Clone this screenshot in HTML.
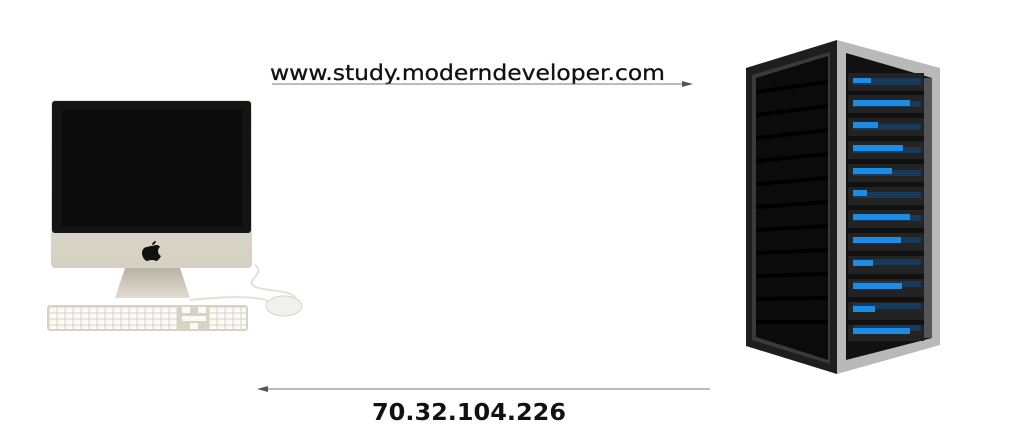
<!DOCTYPE html>
<html><head><meta charset="utf-8"><style>
html,body{margin:0;padding:0;background:#fff;width:1017px;height:447px;overflow:hidden}
</style></head><body>
<svg width="1017" height="447" viewBox="0 0 1017 447" xmlns="http://www.w3.org/2000/svg">
<defs>
<linearGradient id="body" x1="0" y1="0" x2="0" y2="1"><stop offset="0" stop-color="#e8e4da"/><stop offset="1" stop-color="#d6d0c2"/></linearGradient>
<linearGradient id="stand" x1="0" y1="0" x2="0" y2="1"><stop offset="0" stop-color="#b8b2a4"/><stop offset="1" stop-color="#e2ddd2"/></linearGradient>
<pattern id="keys" x="49" y="307" width="8" height="6" patternUnits="userSpaceOnUse"><rect x="0.5" y="0.5" width="7" height="5" fill="#fbfaf7"/></pattern>
</defs>
<text x="270" y="80" font-family="'DejaVu Sans','Liberation Sans',sans-serif" font-size="21" fill="#111" stroke="#111" stroke-width="0.3" textLength="395" lengthAdjust="spacingAndGlyphs">www.study.moderndeveloper.com</text>
<line x1="272" y1="84" x2="688" y2="84" stroke="#777" stroke-width="1"/>
<polygon points="682,81 693,84 682,87" fill="#555"/>
<line x1="262" y1="389" x2="710" y2="389" stroke="#777" stroke-width="1"/>
<polygon points="268,386 257,389 268,392" fill="#555"/>
<text x="372" y="420" font-family="'DejaVu Sans','Liberation Sans',sans-serif" font-weight="bold" font-size="23" fill="#111" textLength="194" lengthAdjust="spacingAndGlyphs">70.32.104.226</text>

<path d="M255,265 C270,275 230,285 270,290 C300,293 300,300 285,303" fill="none" stroke="#e6e1d6" stroke-width="2"/>
<polygon points="125,268 180,268 190,298 115,298" fill="url(#stand)"/>
<rect x="51" y="100" width="201" height="168" rx="4" fill="url(#body)"/>
<rect x="52" y="101" width="199" height="132" rx="3" fill="#141414"/>
<rect x="62" y="110" width="181" height="117" fill="#0c0c0c"/>
<path d="M152,246 c-3,0 -4,1 -5,1 c-3,0 -5,3 -5,6 c0,4 3,8 5,8 c1,0 2,-1 5,-1 c3,0 3,1 4,1 c2,0 4,-3 5,-5 c-2,-1 -3,-3 -3,-5 c0,-2 1,-3 2,-4 c-1,-2 -3,-2 -4,-2 c-1,0 -3,1 -4,1z M152,245 c0,-2 2,-4 4,-4 c0,2 -2,4 -4,4z" fill="#111"/>
<path d="M190,300 C230,296 260,296 270,302" fill="none" stroke="#e6e1d6" stroke-width="2"/>
<rect x="47" y="305" width="201" height="26" rx="3" fill="#d8d2c4"/>
<rect x="49" y="307" width="128" height="22" fill="url(#keys)"/>
<rect x="182" y="307" width="8" height="6" fill="#fbfaf7"/><rect x="198" y="307" width="8" height="6" fill="#fbfaf7"/>
<rect x="182" y="316" width="24" height="5" fill="#fbfaf7"/>
<rect x="190" y="323" width="8" height="6" fill="#fbfaf7"/>
<rect x="209" y="307" width="37" height="22" fill="url(#keys)"/>
<ellipse cx="284" cy="306" rx="18" ry="10" fill="#f2f0ec" stroke="#d8d4cc"/>

<polygon points="746,68 837,40 837,374 746,346" fill="#1e1e1e"/>
<polygon points="752,75 830,52 830,364 752,340" fill="#3a3a3a"/>
<polygon points="756,78 828,56 828,360 756,337" fill="#0b0b0b"/>
<g fill="#000">
<polygon points="756,90 828,80 828,84 756,94"/>
<polygon points="756,113 828,104 828,108 756,117"/>
<polygon points="756,136 828,128 828,132 756,140"/>
<polygon points="756,159 828,152 828,156 756,163"/>
<polygon points="756,182 828,176 828,180 756,186"/>
<polygon points="756,205 828,200 828,204 756,209"/>
<polygon points="756,228 828,224 828,228 756,232"/>
<polygon points="756,251 828,248 828,252 756,255"/>
<polygon points="756,274 828,272 828,276 756,278"/>
<polygon points="756,297 828,296 828,300 756,301"/>
<polygon points="756,320 828,320 828,324 756,324"/>
</g>
<polygon points="837,40 940,68 940,345 837,374" fill="#b9b9b9"/>
<polygon points="846,53 932,78 932,338 846,360" fill="#111"/>
<polygon points="924,78 932,78 932,338 924,338" fill="#555"/>
<g>
<g><rect x="848" y="73" width="76" height="18" fill="#232323"/><rect x="853" y="78" width="68" height="7" fill="#173a5a"/><rect x="853" y="78" width="18" height="5" fill="#1d8ce6"/></g>
<g><rect x="848" y="95" width="76" height="18" fill="#232323"/><rect x="853" y="101" width="68" height="6" fill="#173a5a"/><rect x="853" y="100" width="57" height="6" fill="#1d8ce6"/></g>
<g><rect x="848" y="118" width="76" height="18" fill="#232323"/><rect x="853" y="124" width="68" height="6" fill="#173a5a"/><rect x="853" y="122" width="25" height="6" fill="#1d8ce6"/></g>
<g><rect x="848" y="141" width="76" height="18" fill="#232323"/><rect x="853" y="147" width="68" height="6" fill="#173a5a"/><rect x="853" y="145" width="50" height="6" fill="#1d8ce6"/></g>
<g><rect x="848" y="164" width="76" height="18" fill="#232323"/><rect x="853" y="170" width="68" height="6" fill="#173a5a"/><rect x="853" y="168" width="39" height="6" fill="#1d8ce6"/></g>
<g><rect x="848" y="187" width="76" height="18" fill="#232323"/><rect x="853" y="192" width="68" height="6" fill="#173a5a"/><rect x="853" y="190" width="14" height="6" fill="#1d8ce6"/></g>
<g><rect x="848" y="210" width="76" height="18" fill="#232323"/><rect x="853" y="215" width="68" height="6" fill="#173a5a"/><rect x="853" y="214" width="57" height="6" fill="#1d8ce6"/></g>
<g><rect x="848" y="233" width="76" height="18" fill="#232323"/><rect x="853" y="237" width="68" height="6" fill="#173a5a"/><rect x="853" y="237" width="48" height="6" fill="#1d8ce6"/></g>
<g><rect x="848" y="256" width="76" height="18" fill="#232323"/><rect x="853" y="259" width="68" height="6" fill="#173a5a"/><rect x="853" y="260" width="20" height="6" fill="#1d8ce6"/></g>
<g><rect x="848" y="279" width="76" height="18" fill="#232323"/><rect x="853" y="281" width="68" height="6" fill="#173a5a"/><rect x="853" y="283" width="49" height="6" fill="#1d8ce6"/></g>
<g><rect x="848" y="302" width="76" height="18" fill="#232323"/><rect x="853" y="303" width="68" height="6" fill="#173a5a"/><rect x="853" y="306" width="22" height="6" fill="#1d8ce6"/></g>
<g><rect x="848" y="325" width="76" height="16" fill="#232323"/><rect x="853" y="325" width="68" height="6" fill="#173a5a"/><rect x="853" y="328" width="57" height="6" fill="#1d8ce6"/></g>
</g>
</svg>
</body></html>
